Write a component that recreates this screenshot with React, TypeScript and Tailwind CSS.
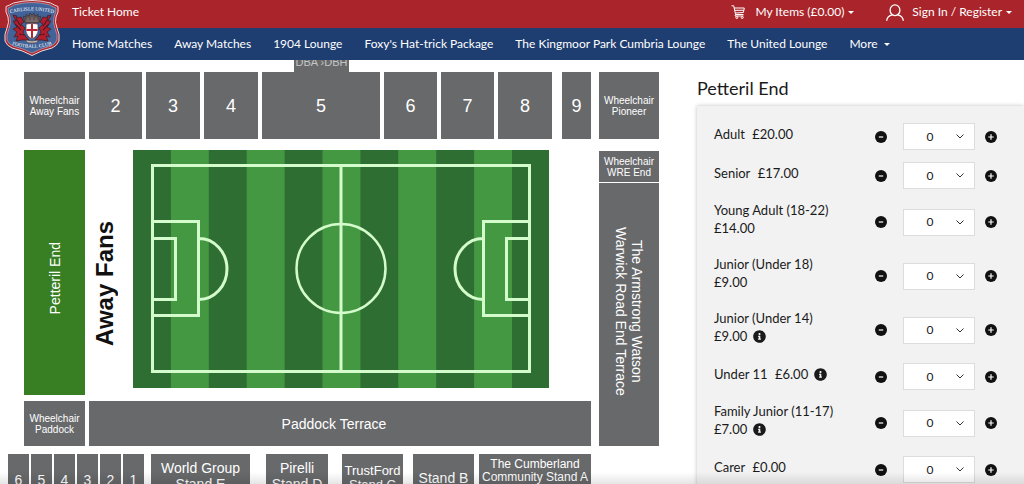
import { useState } from 'react';
import { FaInfoCircle } from 'react-icons/fa';
import clsx from 'clsx';

const navLinks = [
  'Home Matches',
  'Away Matches',
  '1904 Lounge',
  "Foxy's Hat-trick Package",
  'The Kingmoor Park Cumbria Lounge',
  'The United Lounge',
];

const tickets = [
  { id: 'adult', name: 'Adult', price: '£20.00' },
  { id: 'senior', name: 'Senior', price: '£17.00' },
  { id: 'young-adult', name: 'Young Adult (18-22)', price: '£14.00' },
  { id: 'junior-18', name: 'Junior (Under 18)', price: '£9.00' },
  { id: 'junior-14', name: 'Junior (Under 14)', price: '£9.00', info: true },
  { id: 'under-11', name: 'Under 11', price: '£6.00', info: true },
  { id: 'family-junior', name: 'Family Junior (11-17)', price: '£7.00', info: true },
  { id: 'carer', name: 'Carer', price: '£0.00' },
];

const quantities = [0, 1, 2, 3, 4, 5, 6];

function Crest() {
  return (
    <svg viewBox="0 0 56 56" className="h-14 w-14" role="img" aria-label="Carlisle United Football Club">
      <defs>
        <path id="crest-top" d="M4 14Q28 7 52 14" />
        <path id="crest-bottom" d="M4 43.500Q28 52 52 43.500" />
      </defs>
      <path
        d="M2 6.500Q6 5 9.500 3Q19 .5 28 .5Q37 .5 46.500 3Q50 5 54 6.500Q55 12 52 17Q50.500 22 53 28Q56 34 55 41Q53 46 48 48Q38 50 28 55.500Q18 50 8 48Q3 46 1 41Q0 34 3 28Q5.500 22 4 17Q1 12 2 6.500Z"
        fill="#b4222c"
        stroke="#e5dede"
        strokeWidth="1"
      />
      <path
        d="M4 8Q8 6.500 10.500 4.800Q19 2.500 28 2.500Q37 2.500 45.500 4.800Q48 6.500 52 8Q52.500 12 50 17Q48.500 22 51 28.500Q54 35 53 40Q51 44.500 47 46Q38 48 28 53Q18 48 9 46Q5 44.500 3 40Q2 35 5 28.500Q7.500 22 6 17Q3.500 12 4 8Z"
        fill="#426399"
        stroke="#d9c9cf"
        strokeWidth=".5"
      />
      {/* wyverns */}
      <path
        d="M9 15L13 16L12 18L17 17L20 22L17 24L21 28L19 32L22 37L25 40L18 40L12 41L14 36L10 37L13 32L9 29L13 27L9 21L12 21Z"
        fill="#b21e2c"
        stroke="#3d2029"
        strokeWidth=".8"
      />
      <path
        d="M47 15L43 16L44 18L39 17L36 22L39 24L35 28L37 32L34 37L31 40L38 40L44 41L42 36L46 37L43 32L47 29L43 27L47 21L44 21Z"
        fill="#b21e2c"
        stroke="#3d2029"
        strokeWidth=".8"
      />
      <path d="M12 19L17 26M11 24L17 30M15 34L20 35M44 19L39 26M45 24L39 30M41 34L36 35" stroke="#4a1a28" strokeWidth="1.200" />
      {/* mural crown */}
      <path d="M21 23L19 16L22 17L22 14L25 16L26 13L28 15L30 13L31 16L34 14L34 17L37 16L35 23Z" fill="#5f5256" stroke="#37333c" strokeWidth=".7" />
      <path d="M22 21H34M24 18V20M28 17V20M32 18V20" stroke="#a18b86" strokeWidth=".8" />
      {/* shield with cross */}
      <path d="M22 24Q28 22.500 34 24V32Q33 37 28 39Q23 37 22 32Z" fill="#fff" stroke="#4d3a45" strokeWidth=".8" />
      <path d="M27 23.500H29V38H27ZM22.500 29H33.500V31H22.500Z" fill="#bd2432" />
      <path d="M22 40Q28 42 34 40L33 42.500Q28 43.500 23 42.500Z" fill="#c9b9ae" stroke="#4c4854" strokeWidth=".6" />
      <g fill="#fff" className="font-['Liberation_Serif',serif] text-[5px]">
        <text textAnchor="middle">
          <textPath href="#crest-top" startOffset="50%">CARLISLE UNITED</textPath>
        </text>
        <text textAnchor="middle">
          <textPath href="#crest-bottom" startOffset="50%">FOOTBALL CLUB</textPath>
        </text>
      </g>
    </svg>
  );
}

function CartIcon() {
  return (
    <svg viewBox="0 0 14 14" className="h-3.5 w-3.5" fill="none" stroke="currentColor" strokeWidth="1" aria-hidden="true">
      <path d="M.5 .8H2.700L4.600 9.500H12.500M3.200 3H13.300L12.400 7.500L4.300 8M3.700 5.300H12.800" strokeLinejoin="round" />
      <path d="M4.600 9.500L4 11H12.500" />
      <circle cx="5.800" cy="12.500" r="1" />
      <circle cx="11.200" cy="12.500" r="1" />
    </svg>
  );
}

function PersonIcon() {
  return (
    <svg viewBox="0 0 18 17" className="h-[17px] w-[18px]" fill="none" stroke="currentColor" strokeWidth="1.300" aria-hidden="true">
      <ellipse cx="9" cy="6.200" rx="4.900" ry="5.400" />
      <path d="M6.300 10.800C3 11.500 1 13.200 .8 16.300M11.700 10.800C15 11.500 17 13.200 17.200 16.300" strokeLinecap="round" />
    </svg>
  );
}

function Caret() {
  return (
    <svg viewBox="0 0 6 3" className="h-[3px] w-1.5" fill="currentColor" aria-hidden="true">
      <path d="M0 0H6L3 3Z" />
    </svg>
  );
}

function Header() {
  return (
    <header className="relative z-10 shrink-0 text-xs leading-4 text-white">
      <div className="flex h-7 items-center bg-[#a9252b] pr-3 pl-[72px]">
        <a href="#home" className="pb-1">Ticket Home</a>
        <button type="button" className="ml-auto flex items-center pb-1">
          <CartIcon />
          <span className="mr-1 ml-[10px]">My Items (£0.00)</span>
          <Caret />
        </button>
        <button type="button" className="ml-8 flex items-center pb-1">
          <PersonIcon />
          <span className="mr-1 ml-2">Sign In / Register</span>
          <Caret />
        </button>
      </div>
      <nav className="flex h-8 items-center gap-[22px] bg-[#1e3d70] pl-[72px] whitespace-nowrap">
        {navLinks.map((link) => (
          <a key={link} href="#events">{link}</a>
        ))}
        <button type="button" className="flex items-center gap-1.5">
          More <Caret />
        </button>
      </nav>
      <a href="#club" className="absolute top-0 left-1">
        <Crest />
      </a>
    </header>
  );
}

function Stand({ className, children }: { className?: string; children: React.ReactNode }) {
  return (
    <button type="button" className={clsx('flex justify-center bg-[#68696b] text-center whitespace-nowrap text-white', className)}>
      {children}
    </button>
  );
}

function Pitch() {
  const stripes = [1, 3, 5, 7, 9];
  return (
    <svg viewBox="0 0 416 238" className="block h-auto w-full" role="img" aria-label="Pitch">
      <rect width="416" height="238" fill="#2f6e33" />
      {stripes.map((n) => (
        <rect key={n} x={n * 37.9} width="37.900" height="238" fill="#449842" />
      ))}
      <g fill="none" stroke="#d4fbcb" strokeWidth="3">
        <rect x="19.500" y="15.500" width="377" height="206" />
        <path d="M208 15V222" />
        <circle cx="208" cy="118.500" r="44.500" strokeWidth="2.500" />
        <path d="M19 71.500H65.500V165.500H19M19 88.500H42.500V149.500H19M66 88.500A28 30.500 0 0 1 66 149.500" />
        <path d="M397 71.500H350.500V165.500H397M397 88.500H373.500V149.500H397M350 88.500A28 30.500 0 0 0 350 149.500" />
      </g>
    </svg>
  );
}

function StadiumMap() {
  return (
    <section aria-label="Stadium map" className="min-w-0 flex-1 pr-[38px] pl-2 font-['Liberation_Sans',Arial,sans-serif]">
      <div className="pl-4">
        <div className="flex h-3 overflow-hidden pl-[270px]">
          <div className="w-[55px] bg-[#68696b] text-center text-[11px] leading-1 whitespace-nowrap text-[#c4c5c6]">DBA ›DBH</div>
        </div>

        <div className="grid h-[67px] grid-cols-[61fr_53fr_54fr_54fr_118fr_53fr_53fr_54fr_39fr_60fr] gap-1 text-lg">
          <Stand className="items-center text-[10px] leading-[11px]">Wheelchair<br />Away Fans</Stand>
          <Stand className="items-center">2</Stand>
          <Stand className="items-center">3</Stand>
          <Stand className="items-center">4</Stand>
          <Stand className="items-center">5</Stand>
          <Stand className="items-center">6</Stand>
          <Stand className="items-center">7</Stand>
          <Stand className="items-center">8</Stand>
          <Stand className="mr-1 ml-1.5 items-center">9</Stand>
          <Stand className="items-center text-[10px] leading-[11px]">Wheelchair<br />Pioneer</Stand>
        </div>

        <div className="mt-[11px] grid grid-cols-[61fr_506fr_60fr] gap-1 text-sm leading-4">
          <div className="flex flex-col gap-1.5">
            <button type="button" className="flex flex-1 items-center justify-center bg-[#387f23] pt-3 text-white">
              <span className="rotate-180 [writing-mode:vertical-rl]">Petteril End</span>
            </button>
            <Stand className="h-[45px] items-center text-[10px] leading-[11px]">Wheelchair<br />Paddock</Stand>
          </div>

          <div className="flex flex-col gap-[13px]">
            <div className="flex pr-[46px]">
              <div className="flex w-11 shrink-0 items-center pt-7">
                <span className="rotate-180 text-2xl font-bold text-[#111] [writing-mode:vertical-rl]">Away Fans</span>
              </div>
              <div className="flex-1">
                <Pitch />
              </div>
            </div>
            <Stand className="mr-1 h-[45px] items-center pr-3">Paddock Terrace</Stand>
          </div>

          <div className="flex flex-col gap-px pt-px">
            <Stand className="h-[31px] items-center text-[10px] leading-[11px]">Wheelchair<br />WRE End</Stand>
            <Stand className="flex-1 items-center pb-1.5">
              <span className="[writing-mode:vertical-rl]">The Armstrong Watson<br />Warwick Road End Terrace</span>
            </Stand>
          </div>
        </div>
      </div>

      <div className="mt-2 mr-[68px] flex h-16 text-sm leading-4">
        <div className="grid flex-[136] grid-cols-6 gap-0.5">
          {[6, 5, 4, 3, 2, 1].map((n) => (
            <Stand key={n} className="pt-[18px]">{n}</Stand>
          ))}
        </div>
        <Stand className="ml-[7px] flex-[99] pt-1.5">World Group<br />Stand E</Stand>
        <Stand className="ml-4 flex-[62] pt-1.5">Pirelli<br />Stand D</Stand>
        <Stand className="ml-3.5 flex-[61] pt-2.5 text-[13px] leading-[14px]">TrustFord<br />Stand C</Stand>
        <Stand className="ml-2.5 flex-[61] pt-4">Stand B</Stand>
        <Stand className="ml-[5px] flex-[112] pt-1 text-xs leading-[13px]">The Cumberland<br />Community Stand A</Stand>
      </div>
    </section>
  );
}

function TicketRow({ ticket }: { ticket: (typeof tickets)[number] }) {
  const [qty, setQty] = useState(0);

  return (
    <li className="flex items-center py-1.5">
      <div className="w-32 pb-1.5">
        <label htmlFor={ticket.id}>
          <span className="mr-1">{ticket.name}</span> {ticket.price}
        </label>
        {ticket.info && (
          <button type="button" aria-label={`About ${ticket.name}`} className="ml-1.5 align-[-2px]">
            <FaInfoCircle className="block h-[13px] w-[13px]" />
          </button>
        )}
      </div>
      <button type="button" aria-label="Remove one" className="ml-auto" onClick={() => setQty(Math.max(0, qty - 1))}>
        <svg viewBox="0 0 12 12" className="block h-3 w-3">
          <circle cx="6" cy="6" r="6" fill="#111" />
          <path d="M3.800 6H8.200" stroke="#fff" strokeWidth="1.200" />
        </svg>
      </button>
      <div className="relative mr-2.5 ml-4">
        <select
          id={ticket.id}
          value={qty}
          onChange={(e) => setQty(Number(e.target.value))}
          className="block h-[27px] w-[72px] appearance-none border border-[#dcdcdc] bg-white pr-[18px] text-center text-xs"
        >
          {quantities.map((n) => (
            <option key={n} value={n}>{n}</option>
          ))}
        </select>
        <svg viewBox="0 0 8 5" className="pointer-events-none absolute top-[11px] right-[11px] h-[5px] w-2" fill="none" stroke="#333">
          <path d="M.5 .5L4 4L7.500 .5" />
        </svg>
      </div>
      <button type="button" aria-label="Add one" onClick={() => setQty(Math.min(6, qty + 1))}>
        <svg viewBox="0 0 12 12" className="block h-3 w-3">
          <circle cx="6" cy="6" r="6" fill="#111" />
          <path d="M3.300 6H8.700M6 3.300V8.700" stroke="#fff" strokeWidth="1.200" />
        </svg>
      </button>
    </li>
  );
}

export default function App() {
  return (
    <div className="flex h-screen flex-col overflow-hidden bg-white font-[Lato,sans-serif] text-[#1a1a1a]">
      <Header />
      <main className="flex min-h-0 flex-1 overflow-hidden">
        <StadiumMap />
        <aside className="w-[327px] shrink-0">
          <h1 className="pt-4 pb-1.5 text-lg leading-6">Petteril End</h1>
          <ul className="bg-[#f2f2f2] pt-[11px] pr-[27px] pb-6 pl-[17px] text-[13px] leading-[18px] shadow-[0_0_4px_rgba(0,0,0,0.25)]">
            {tickets.map((ticket) => (
              <TicketRow key={ticket.id} ticket={ticket} />
            ))}
          </ul>
        </aside>
      </main>
      <div className="pointer-events-none fixed inset-x-0 bottom-0 h-3 bg-gradient-to-t from-black/10 to-transparent" />
    </div>
  );
}
